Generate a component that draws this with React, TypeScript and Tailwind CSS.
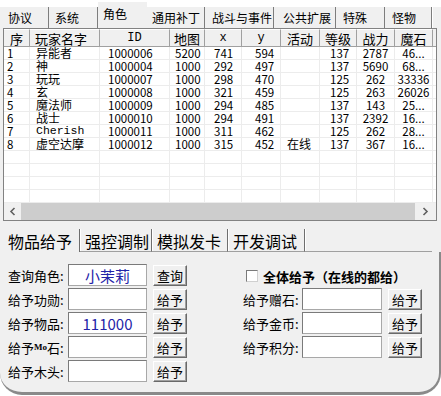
import React from 'react';

const topTabs = [
  { label: '协议', cls: 'w-[46px] pl-[5px]' },
  { label: '系统', cls: 'w-[49px] pl-[6px]' },
  { label: '角色', cls: 'w-[49px] pl-[5px]', active: true },
  { label: '通用补丁', cls: 'w-[58px] pl-[5px]' },
  { label: '战斗与事件', cls: 'w-[69px] pl-[7px]' },
  { label: '公共扩展', cls: 'w-[62px] pl-[9px]' },
  { label: '特殊', cls: 'w-[49px] pl-[7px]' },
  { label: '怪物', cls: 'w-[47px] pl-[7px]' },
];

const cols = [
  { w: 'w-[26px]', head: 'text-center', cell: 'pl-[3px]' },
  { w: 'w-[70px]', head: 'pl-[5px]', cell: 'pl-[6px]' },
  { w: 'w-[70px]', head: 'text-center', cell: 'pl-[8px]' },
  { w: 'w-[35px]', head: 'text-center', cell: 'pl-[5px]' },
  { w: 'w-[37px]', head: 'text-center', cell: 'pl-[9px]' },
  { w: 'w-[39px]', head: 'text-center', cell: 'pl-[13px]' },
  { w: 'w-[39px]', head: 'text-center', cell: 'pl-[6px]' },
  { w: 'w-[37px]', head: 'text-center', cell: 'pl-[10px]' },
  { w: 'w-[38px]', head: 'text-center', cell: 'text-center' },
  { w: 'w-[38px]', head: 'text-center', cell: 'text-center' },
];

const headers = ['序', '玩家名字', 'ID', '地图', 'x', 'y', '活动', '等级', '战力', '魔石'];

const rows = [
  ['1', '异能者', '1000006', '5200', '741', '594', '', '137', '2787', '46...'],
  ['2', '神', '1000004', '1000', '292', '497', '', '137', '5690', '68...'],
  ['3', '玩玩', '1000007', '1000', '298', '470', '', '125', '262', '33336'],
  ['4', '玄', '1000008', '1000', '321', '459', '', '125', '263', '26026'],
  ['5', '魔法师', '1000009', '1000', '294', '485', '', '137', '143', '25...'],
  ['6', '战士', '1000010', '1000', '294', '491', '', '137', '2392', '16...'],
  ['7', 'Cherish', '1000011', '1000', '311', '462', '', '125', '262', '28...'],
  ['8', '虚空达摩', '1000012', '1000', '315', '452', '在线', '137', '367', '16...'],
  ['', '', '', '', '', '', '', '', '', ''],
  ['', '', '', '', '', '', '', '', '', ''],
  ['', '', '', '', '', '', '', '', '', ''],
  ['', '', '', '', '', '', '', '', '', ''],
];

const bottomTabs = [
  { label: '物品给予', cls: 'w-[80px] pl-[8px]', active: true },
  { label: '强控调制', cls: 'w-[72px] pl-[5px]' },
  { label: '模拟发卡', cls: 'w-[76px] pl-[5px]' },
  { label: '开发调试', cls: 'w-[77px] pl-[5px]' },
];

function Btn({ label }: { label: string }) {
  return (
    <div className="w-[34px] h-[21px] mt-[1px] flex items-center justify-center bg-[#f0f0f0] border border-t-white border-l-white border-r-[#696969] border-b-[#696969] shadow-[inset_-1px_-1px_0_#a0a0a0] text-[13px] leading-none text-black">
      {label}
    </div>
  );
}

function Field({ value, w }: { value?: string; w: string }) {
  return (
    <div className={`${w} h-[22px] bg-white border border-t-[#7a7a7a] border-l-[#7a7a7a] border-r-[#a8a8a8] border-b-[#a8a8a8] flex items-center justify-center text-[15px] text-[#2323a8] leading-none`}>
      {value}
    </div>
  );
}

function FormRow({ label, value, labelW, fieldW }: { label: React.ReactNode; value?: string; labelW: string; fieldW: string }) {
  return (
    <div className="flex items-start h-[24px]">
      <div className={`${labelW} h-[22px] flex items-center text-[13px] leading-none whitespace-nowrap text-black`}>{label}</div>
      <Field value={value} w={fieldW} />
      <div className="ml-[6px]">
        <Btn label={label === '查询角色:' ? '查询' : '给予'} />
      </div>
    </div>
  );
}

export default function App() {
  return (
    <div
      className="w-[441px] h-[396px] bg-white overflow-hidden text-black"
      style={{ fontFamily: '"Noto Sans CJK SC", "Liberation Sans", sans-serif' }}
    >
      <div className="bg-[#f0f0f0]">
        {/* top tabs */}
        <div className="h-[28px] flex items-end pl-[3px] bg-gradient-to-b from-white from-[25%] to-[#f0f0f0] to-[25%]">
          {topTabs.map((t) =>
            t.active ? (
              <div key={t.label} className={`${t.cls} h-[26px] bg-[#f0f0f0] text-[12px] leading-none pt-[6px] whitespace-nowrap`}>
                {t.label}
              </div>
            ) : (
              <div
                key={t.label}
                className={`${t.cls} h-[21px] bg-[#f0f0f0] text-[12px] leading-none pt-[5px] whitespace-nowrap border-r border-[#7d7d7d] shadow-[1px_0_0_white]`}
              >
                {t.label}
              </div>
            ),
          )}
        </div>

        {/* table */}
        <div className="ml-[3px] w-[434px] border border-[#828282] bg-white">
          <div className="flex h-[18px] bg-[#f0f0f0] border-b border-[#a0a0a0]">
            {headers.map((h, i) => (
              <div
                key={h}
                className={`${cols[i].w} ${cols[i].head} shrink-0 leading-[17px] whitespace-nowrap border-r border-[#a0a0a0] border-t border-t-white ${
                  h === 'ID' || h === 'x' || h === 'y' ? 'font-["Liberation_Mono"] text-[12px]' : 'text-[13px]'
                }`}
              >
                {h}
              </div>
            ))}
            <div className="flex-1" />
          </div>
          {rows.map((r, ri) => (
            <div key={ri} className="flex h-[13px] border-b border-[#ececec] last:border-b-0">
              {r.map((c, ci) => (
                <div
                  key={ci}
                  className={`${cols[ci].w} ${cols[ci].cell} shrink-0 border-r border-[#ececec] leading-[12px] whitespace-nowrap ${
                    c === 'Cherish'
                      ? 'font-["Liberation_Mono"] text-[11.5px]'
                      : /[\u4e00-\u9fff]/.test(c)
                        ? 'text-[12px]'
                        : 'text-[11.5px]'
                  }`}
                >
                  {c}
                </div>
              ))}
              <div className="flex-1" />
            </div>
          ))}
          {/* scrollbar */}
          <div className="flex h-[17px] bg-[#f0f0f0]">
            <div className="w-[17px] flex items-center justify-center">
              <svg width="7" height="9" viewBox="0 0 7 9">
                <path d="M5.5 1 L2 4.5 L5.5 8" fill="none" stroke="#606060" strokeWidth="1.6" />
              </svg>
            </div>
            <div className="w-[394px] bg-[#cdcdcd]" />
            <div className="flex-1 flex items-center justify-center">
              <svg width="7" height="9" viewBox="0 0 7 9">
                <path d="M1.5 1 L5 4.5 L1.5 8" fill="none" stroke="#606060" strokeWidth="1.6" />
              </svg>
            </div>
          </div>
        </div>

        {/* bottom tabs */}
        <div className="h-[31px] pt-[8px] flex items-stretch">
          {bottomTabs.map((t) => (
            <div
              key={t.label}
              className={`${t.cls} text-[16px] leading-none pt-[4px] whitespace-nowrap border-r border-[#6e6e6e] shadow-[1px_0_0_white] ${
                t.active ? '' : 'border-b border-b-[#a0a0a0]'
              }`}
            >
              {t.label}
            </div>
          ))}
          <div className="w-[127px] border-b border-[#a0a0a0]" />
        </div>
      </div>

      {/* panel */}
      <div className="h-[143px] bg-[#f0f0f0] border-r-[2px] border-b-[3px] border-[#8a8a8a] rounded-b-[22px] flex pt-[12px]">
        <div className="pl-[8px] w-[236px]">
          <FormRow label="查询角色:" value="小茉莉" labelW="w-[60px]" fieldW="w-[79px]" />
          <FormRow label="给予功勋:" labelW="w-[60px]" fieldW="w-[79px]" />
          <FormRow label="给予物品:" value="111000" labelW="w-[60px]" fieldW="w-[79px]" />
          <FormRow
            label={
              <>
                给予<span className="text-[9px] font-bold font-['Liberation_Serif']">Mo</span>石:
              </>
            }
            labelW="w-[60px]"
            fieldW="w-[79px]"
          />
          <FormRow label="给予木头:" labelW="w-[60px]" fieldW="w-[79px]" />
        </div>
        <div className="pl-[7px]">
          <div className="h-[24px] flex items-center pl-[3px]">
            <div className="w-[12px] h-[12px] bg-white border border-t-[#7a7a7a] border-l-[#7a7a7a] border-r-[#d0d0d0] border-b-[#d0d0d0]" />
            <div className="ml-[5px] text-[13px] leading-none font-bold whitespace-nowrap">全体给予（在线的都给）</div>
          </div>
          <FormRow label="给予赠石:" labelW="w-[59px]" fieldW="w-[80px]" />
          <FormRow label="给予金币:" labelW="w-[59px]" fieldW="w-[80px]" />
          <FormRow label="给予积分:" labelW="w-[59px]" fieldW="w-[80px]" />
        </div>
      </div>
    </div>
  );
}
